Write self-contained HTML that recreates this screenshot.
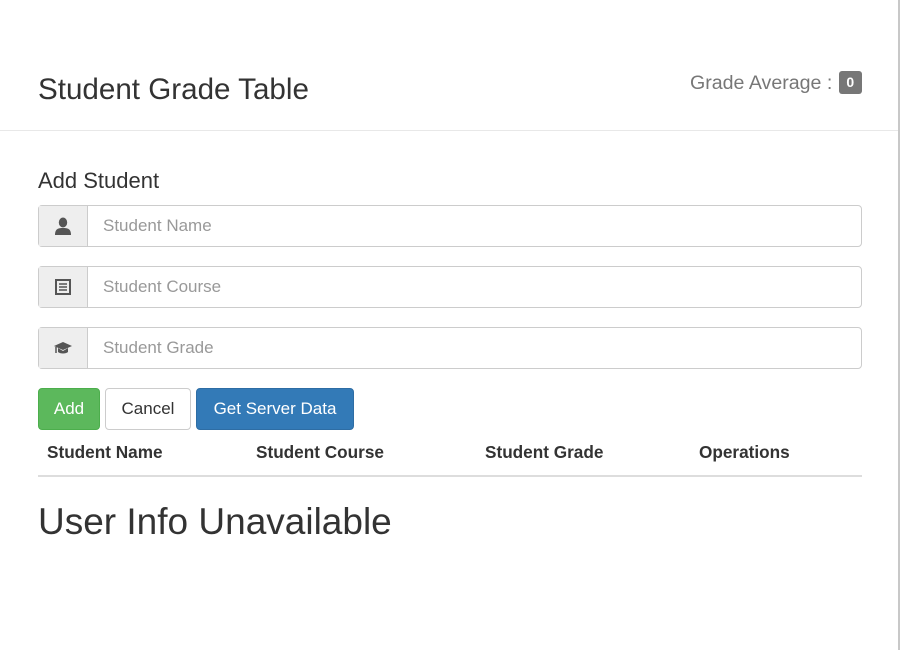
<!DOCTYPE html>
<html><head><style>
*{box-sizing:border-box;margin:0;padding:0}
body{width:900px;height:650px;background:#fff;font-family:"Liberation Sans",sans-serif;color:#333;position:relative;overflow:hidden}
.vr{position:absolute;right:0;top:0;width:2px;height:650px;background:#c8c8c8}
h1{position:absolute;left:38px;top:73px;font-size:29.6px;font-weight:normal}
.avg{position:absolute;left:690px;top:71px;font-size:19.6px;color:#777}
.badge{display:inline-block;background:#777;color:#fff;font-size:14px;font-weight:bold;border-radius:3px;width:23px;height:23px;text-align:center;line-height:23px;vertical-align:2px;margin-left:1px}
.hr{position:absolute;left:0;top:130px;width:898px;height:1px;background:#e8e8e8}
h3{position:absolute;left:38px;top:168px;font-size:22px;font-weight:normal}
.grp{position:absolute;left:38px;width:824px;height:42px;border:1px solid #ccc;border-radius:4px;display:flex}
.ad{width:49px;background:#eee;border-right:1px solid #ccc;display:flex;align-items:center;justify-content:center}
.ph{padding-left:15px;line-height:40px;font-size:17px;color:#999}
.btn{position:absolute;top:388px;height:42px;border-radius:4px;font-size:17px;line-height:40px;text-align:center;border:1px solid}
.th{position:absolute;top:442px;font-size:17.2px;font-weight:bold}
.tl{position:absolute;left:38px;top:475px;width:824px;height:2px;background:#ddd}
h2{position:absolute;left:38px;top:501px;font-size:37px;font-weight:normal}
</style></head><body>
<div class="vr"></div>
<h1>Student Grade Table</h1>
<div class="avg">Grade Average : <span class="badge">0</span></div>
<div class="hr"></div>
<h3>Add Student</h3>
<div class="grp" style="top:205px"><div class="ad"><svg width="18" height="19" viewBox="0 0 18 19"><ellipse cx="9" cy="5.5" rx="4.2" ry="5" fill="#555"/><path d="M1 18 C1 12 4 11 9 11 C14 11 17 12 17 18Z" fill="#555"/></svg></div><div class="ph">Student Name</div></div>
<div class="grp" style="top:266px"><div class="ad"><svg width="16" height="16" viewBox="0 0 16 16"><rect x="1" y="1" width="14" height="14" fill="none" stroke="#555" stroke-width="2"/><path d="M4 5h8M4 8h8M4 11h8" stroke="#555" stroke-width="1.5"/></svg></div><div class="ph">Student Course</div></div>
<div class="grp" style="top:327px"><div class="ad"><svg width="20" height="16" viewBox="0 0 20 16"><path d="M1 6 L10 2 L19 6 L10 10Z" fill="#555"/><path d="M5 8v4c2 2 8 2 10 0V8l-5 3z" fill="#555"/><path d="M3 7v6" stroke="#555" stroke-width="1.5"/></svg></div><div class="ph">Student Grade</div></div>
<div class="btn" style="left:38px;width:62px;background:#5cb85c;border-color:#4cae4c;color:#fff">Add</div>
<div class="btn" style="left:105px;width:86px;background:#fff;border-color:#ccc;color:#333">Cancel</div>
<div class="btn" style="left:196px;width:158px;background:#337ab7;border-color:#2e6da4;color:#fff">Get Server Data</div>
<div class="th" style="left:47px">Student Name</div>
<div class="th" style="left:256px">Student Course</div>
<div class="th" style="left:485px">Student Grade</div>
<div class="th" style="left:699px">Operations</div>
<div class="tl"></div>
<h2>User Info Unavailable</h2>
</body></html>
